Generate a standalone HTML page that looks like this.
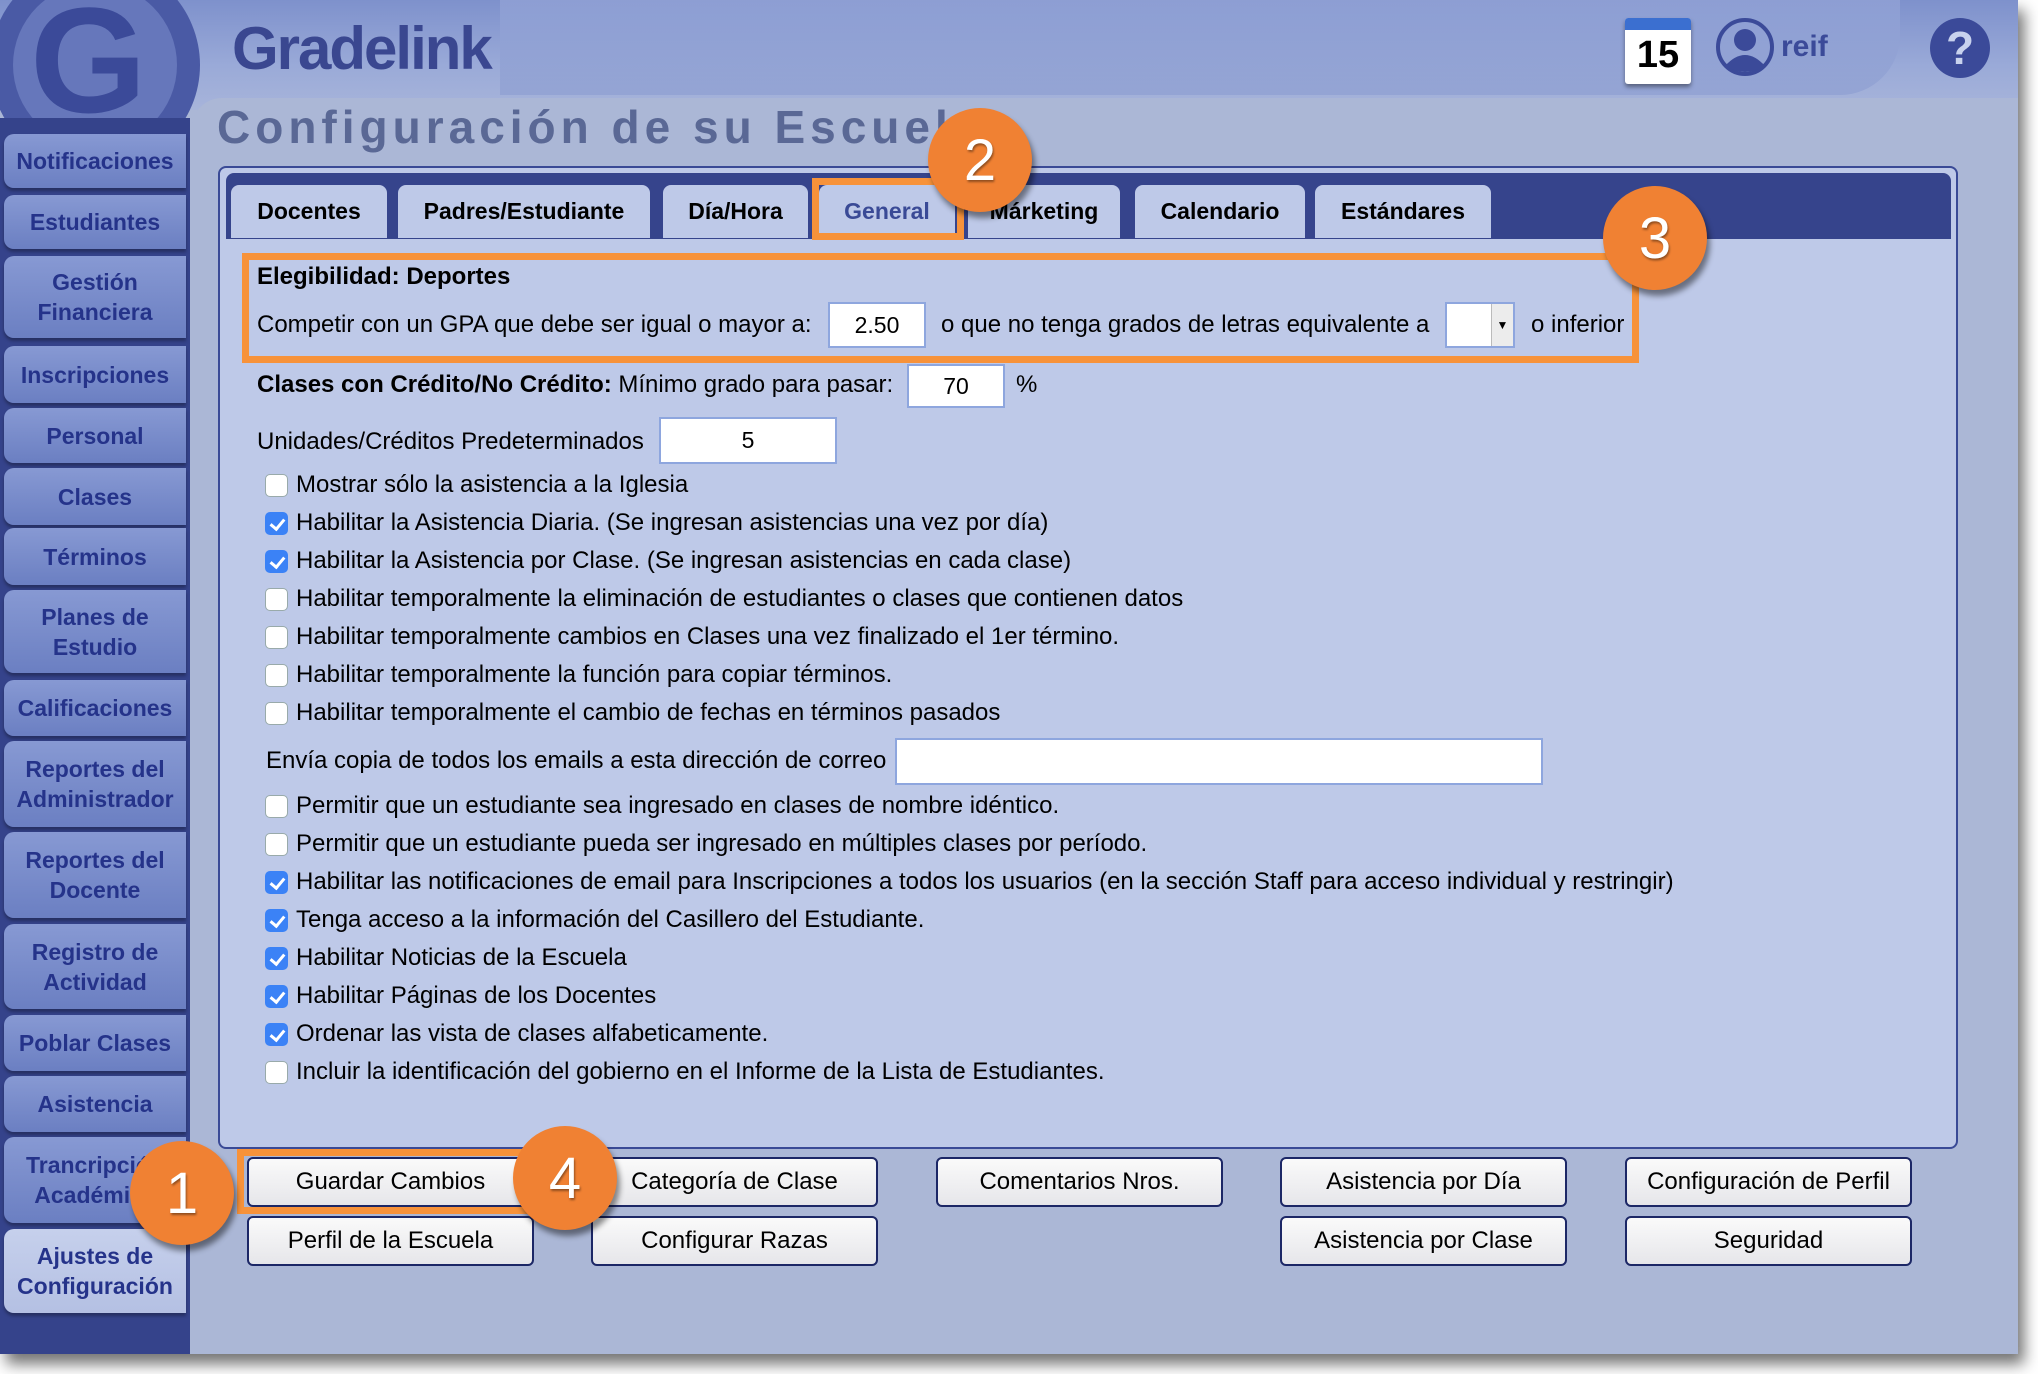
<!DOCTYPE html>
<html><head><meta charset="utf-8"><style>
*{box-sizing:border-box;margin:0;padding:0}
body{width:2038px;height:1374px;background:#fff;position:relative;overflow:hidden;font-family:"Liberation Sans",Arial,sans-serif;}
#shot{position:absolute;left:0;top:0;width:2018px;height:1354px;background:#abb7d6;box-shadow:6px 10px 14px rgba(0,0,0,.55);overflow:hidden}
#hdr{position:absolute;left:0;top:0;width:2018px;height:110px;background:linear-gradient(180deg,#7e91cc 0%,#9aaad8 60%,#a7b4da 100%)}
#hdr2{position:absolute;left:500px;top:0;width:1400px;height:95px;background:linear-gradient(180deg,#97a7d8,#8a9bd0);border-radius:0 0 60px 0;opacity:.6}
#side{position:absolute;left:0;top:118px;width:190px;height:1240px;background:#35438b}
.si{position:absolute;left:4px;width:182px;background:linear-gradient(180deg,#8799d3,#6b7fc2);border-radius:10px 0 0 10px;color:#25338a;font-weight:bold;font-size:23px;text-align:center;display:flex;align-items:center;justify-content:center;line-height:30px;box-shadow:0 3px 3px rgba(0,0,0,.3)}
.si.act{background:linear-gradient(180deg,#c6d0ec,#b4c0e3)}
#main{position:absolute;left:192px;top:98px;width:1826px;height:1260px;background:#abb7d6;border-radius:30px 0 0 0}
#title{position:absolute;left:217px;top:100px;font-size:46px;font-weight:bold;color:#5a6895;letter-spacing:5px}
#box{position:absolute;left:218px;top:166px;width:1740px;height:983px;background:#bec9e8;border:2px solid #3a4a96;border-radius:8px}
#tabbar{position:absolute;left:226px;top:173px;width:1725px;height:66px;background:#36448c;border-radius:8px 8px 0 0}
.tab{position:absolute;top:185px;height:53px;background:#bec9e8;border-radius:8px 8px 0 0;font-weight:bold;font-size:23px;color:#000;display:flex;align-items:center;justify-content:center}
.t{position:absolute;font-size:24px;color:#000;white-space:nowrap;line-height:28px}
.inp{position:absolute;background:#fff;border:2px solid #8ea6de;font-size:23px;display:flex;align-items:center;justify-content:center}
.cb{position:absolute;left:265px;width:23px;height:23px;border-radius:5px;background:#fff;border:1px solid #9aa;}
.cb.on{background:#3b82f6;border-color:#3b82f6}
.cb.on::after{content:"";position:absolute;left:7px;top:3px;width:6px;height:11px;border:solid #fff;border-width:0 3px 3px 0;transform:rotate(40deg)}
.btn{position:absolute;height:50px;width:287px;background:linear-gradient(180deg,#fafafa,#e6e6ea);border:2px solid #1c2766;border-radius:6px;font-size:24px;display:flex;align-items:center;justify-content:center}
.ob{position:absolute;border:7px solid #f7923a}
.circ{position:absolute;width:104px;height:104px;border-radius:50%;background:#f08133;color:#fff;font-size:58px;display:flex;align-items:center;justify-content:center;box-shadow:3px 6px 6px rgba(0,0,0,.45);text-shadow:1px 2px 2px rgba(0,0,0,.4)}
</style></head><body>
<div id="shot">
<div id="hdr"></div><div id="hdr2"></div>
<svg style="position:absolute;left:0;top:0" width="220" height="140"><circle cx="95" cy="65" r="105" fill="#4a5aa5"/><circle cx="95" cy="65" r="82" fill="#6677bb"/><text x="30" y="112" font-family="Liberation Sans" font-weight="bold" font-size="150" fill="#3b4a99">G</text></svg>
<div style="position:absolute;left:232px;top:14px;font-size:60px;font-weight:bold;color:#3a4790;letter-spacing:-2px">Gradelink</div>
<div id="side"></div>
<div id="main"></div>
<div id="title">Configuración de su Escuela</div>
<div id="box"></div>
<div id="tabbar"></div>
<div class="tab" style="left:231px;width:156px">Docentes</div>
<div class="tab" style="left:398px;width:252px">Padres/Estudiante</div>
<div class="tab" style="left:663px;width:145px">Día/Hora</div>
<div class="tab" style="left:819px;width:136px;color:#3a4a96">General</div>
<div class="tab" style="left:968px;width:152px">Márketing</div>
<div class="tab" style="left:1135px;width:170px">Calendario</div>
<div class="tab" style="left:1315px;width:176px">Estándares</div>
<div class="ob" style="left:812px;top:178px;width:152px;height:62px"></div>
<div class="si" style="top:134px;height:54px">Notificaciones</div>
<div class="si" style="top:195px;height:54px">Estudiantes</div>
<div class="si" style="top:256px;height:82px">Gestión<br>Financiera</div>
<div class="si" style="top:346px;height:57px">Inscripciones</div>
<div class="si" style="top:408px;height:55px">Personal</div>
<div class="si" style="top:468px;height:57px">Clases</div>
<div class="si" style="top:528px;height:57px">Términos</div>
<div class="si" style="top:590px;height:83px">Planes de<br>Estudio</div>
<div class="si" style="top:680px;height:56px">Calificaciones</div>
<div class="si" style="top:741px;height:86px">Reportes del<br>Administrador</div>
<div class="si" style="top:832px;height:86px">Reportes del<br>Docente</div>
<div class="si" style="top:924px;height:85px">Registro de<br>Actividad</div>
<div class="si" style="top:1015px;height:56px">Poblar Clases</div>
<div class="si" style="top:1076px;height:56px">Asistencia</div>
<div class="si" style="top:1137px;height:86px">Trancripción<br>Académica</div>
<div class="si act" style="top:1229px;height:84px">Ajustes de<br>Configuración</div>
<div class="t" style="left:257px;top:263px;font-weight:bold">Elegibilidad: Deportes</div>
<div class="t" style="left:257px;top:311px">Competir con un GPA que debe ser igual o mayor a:</div>
<div class="inp" style="left:828px;top:302px;width:98px;height:46px">2.50</div>
<div class="t" style="left:941px;top:311px">o que no tenga grados de letras equivalente a</div>
<div class="inp" style="left:1445px;top:302px;width:70px;height:46px;justify-content:flex-end"><div style="width:22px;height:42px;background:#ececec;border-left:1px solid #bbb;font-size:12px;display:flex;align-items:center;justify-content:center">▼</div></div>
<div class="t" style="left:1531px;top:311px">o inferior</div>
<div class="ob" style="left:242px;top:253px;width:1397px;height:110px"></div>
<div class="t" style="left:257px;top:371px"><b>Clases con Crédito/No Crédito:</b> Mínimo grado para pasar:</div>
<div class="inp" style="left:907px;top:364px;width:98px;height:44px">70</div>
<div class="t" style="left:1016px;top:371px">%</div>
<div class="t" style="left:257px;top:428px">Unidades/Créditos Predeterminados</div>
<div class="inp" style="left:659px;top:417px;width:178px;height:47px">5</div>
<div class="cb" style="top:474px"></div><div class="t" style="left:296px;top:471px">Mostrar sólo la asistencia a la Iglesia</div>
<div class="cb on" style="top:512px"></div><div class="t" style="left:296px;top:509px">Habilitar la Asistencia Diaria. (Se ingresan asistencias una vez por día)</div>
<div class="cb on" style="top:550px"></div><div class="t" style="left:296px;top:547px">Habilitar la Asistencia por Clase. (Se ingresan asistencias en cada clase)</div>
<div class="cb" style="top:588px"></div><div class="t" style="left:296px;top:585px">Habilitar temporalmente la eliminación de estudiantes o clases que contienen datos</div>
<div class="cb" style="top:626px"></div><div class="t" style="left:296px;top:623px">Habilitar temporalmente cambios en Clases una vez finalizado el 1er término.</div>
<div class="cb" style="top:664px"></div><div class="t" style="left:296px;top:661px">Habilitar temporalmente la función para copiar términos.</div>
<div class="cb" style="top:702px"></div><div class="t" style="left:296px;top:699px">Habilitar temporalmente el cambio de fechas en términos pasados</div>
<div class="t" style="left:266px;top:747px">Envía copia de todos los emails a esta dirección de correo</div>
<div class="inp" style="left:895px;top:738px;width:648px;height:47px"></div>
<div class="cb" style="top:795px"></div><div class="t" style="left:296px;top:792px">Permitir que un estudiante sea ingresado en clases de nombre idéntico.</div>
<div class="cb" style="top:833px"></div><div class="t" style="left:296px;top:830px">Permitir que un estudiante pueda ser ingresado en múltiples clases por período.</div>
<div class="cb on" style="top:871px"></div><div class="t" style="left:296px;top:868px">Habilitar las notificaciones de email para Inscripciones a todos los usuarios (en la sección Staff para acceso individual y restringir)</div>
<div class="cb on" style="top:909px"></div><div class="t" style="left:296px;top:906px">Tenga acceso a la información del Casillero del Estudiante.</div>
<div class="cb on" style="top:947px"></div><div class="t" style="left:296px;top:944px">Habilitar Noticias de la Escuela</div>
<div class="cb on" style="top:985px"></div><div class="t" style="left:296px;top:982px">Habilitar Páginas de los Docentes</div>
<div class="cb on" style="top:1023px"></div><div class="t" style="left:296px;top:1020px">Ordenar las vista de clases alfabeticamente.</div>
<div class="cb" style="top:1061px"></div><div class="t" style="left:296px;top:1058px">Incluir la identificación del gobierno en el Informe de la Lista de Estudiantes.</div>
<div class="btn" style="left:247px;top:1157px">Guardar Cambios</div>
<div class="btn" style="left:591px;top:1157px">Categoría de Clase</div>
<div class="btn" style="left:936px;top:1157px">Comentarios Nros.</div>
<div class="btn" style="left:1280px;top:1157px">Asistencia por Día</div>
<div class="btn" style="left:1625px;top:1157px">Configuración de Perfil</div>
<div class="btn" style="left:247px;top:1216px">Perfil de la Escuela</div>
<div class="btn" style="left:591px;top:1216px">Configurar Razas</div>
<div class="btn" style="left:1280px;top:1216px">Asistencia por Clase</div>
<div class="btn" style="left:1625px;top:1216px">Seguridad</div>
<div class="ob" style="left:237px;top:1149px;width:300px;height:65px"></div>
<div style="position:absolute;left:1625px;top:18px;width:66px;height:66px;background:#fff;border-radius:3px;box-shadow:0 3px 4px rgba(0,0,0,.4)"><div style="height:12px;background:#3b6fd0;border-radius:3px 3px 0 0"></div><div style="font-size:38px;font-weight:bold;text-align:center;line-height:50px">15</div></div>
<svg style="position:absolute;left:1714px;top:16px" width="62" height="62"><circle cx="31" cy="31" r="27" fill="none" stroke="#3b4a99" stroke-width="4"/><circle cx="31" cy="24" r="11" fill="#3b4a99"/><path d="M11 50 Q31 28 51 50 Q31 62 11 50Z" fill="#3b4a99"/></svg>
<div style="position:absolute;left:1781px;top:30px;font-size:30px;font-weight:bold;color:#3b4a99">reif</div>
<div style="position:absolute;left:1930px;top:18px;width:60px;height:60px;border-radius:50%;background:#3b4a99;color:#c8d2ee;font-size:46px;font-weight:bold;text-align:center;line-height:60px">?</div>
<div class="circ" style="left:928px;top:108px">2</div>
<div class="circ" style="left:1603px;top:186px">3</div>
<div class="circ" style="left:130px;top:1141px">1</div>
<div class="circ" style="left:513px;top:1126px">4</div>
</div>
</body></html>
